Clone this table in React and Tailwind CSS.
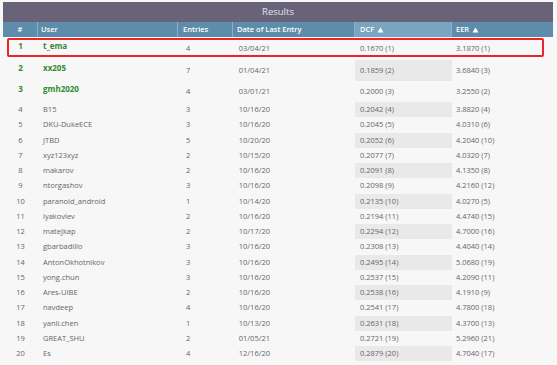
const ROWS = [
  ['1', 't_ema', '4', '03/04/21', '0.1670 (1)', '3.1870 (1)'],
  ['2', 'xx205', '7', '01/04/21', '0.1859 (2)', '3.6840 (3)'],
  ['3', 'gmh2020', '4', '03/01/21', '0.2000 (3)', '3.2550 (2)'],
  ['4', 'B15', '3', '10/16/20', '0.2042 (4)', '3.8820 (4)'],
  ['5', 'DKU-DukeECE', '3', '10/16/20', '0.2045 (5)', '4.0310 (6)'],
  ['6', 'JTBD', '5', '10/20/20', '0.2052 (6)', '4.2040 (10)'],
  ['7', 'xyz123xyz', '2', '10/15/20', '0.2077 (7)', '4.0320 (7)'],
  ['8', 'makarov', '2', '10/16/20', '0.2091 (8)', '4.1350 (8)'],
  ['9', 'ntorgashov', '3', '10/16/20', '0.2098 (9)', '4.2160 (12)'],
  ['10', 'paranoid_android', '1', '10/14/20', '0.2135 (10)', '4.0270 (5)'],
  ['11', 'iyakovlev', '2', '10/16/20', '0.2194 (11)', '4.4740 (15)'],
  ['12', 'matejkap', '2', '10/17/20', '0.2294 (12)', '4.7000 (16)'],
  ['13', 'gbarbadillo', '3', '10/16/20', '0.2308 (13)', '4.4040 (14)'],
  ['14', 'AntonOkhotnikov', '3', '10/16/20', '0.2495 (14)', '5.0680 (19)'],
  ['15', 'yong.chun', '3', '10/16/20', '0.2537 (15)', '4.2090 (11)'],
  ['16', 'Ares-UIBE', '2', '10/16/20', '0.2538 (16)', '4.1910 (9)'],
  ['17', 'navdeep', '4', '10/16/20', '0.2541 (17)', '4.7800 (18)'],
  ['18', 'yanli.chen', '1', '10/13/20', '0.2631 (18)', '4.3700 (13)'],
  ['19', 'GREAT_SHU', '2', '01/05/21', '0.2721 (19)', '5.2960 (21)'],
  ['20', 'Es', '4', '12/16/20', '0.2879 (20)', '4.7040 (17)'],
];

const COLS = 'grid grid-cols-[35px_140px_55px_122px_97px_101px]';

function Tri() {
  return (
    <svg width="7" height="6" viewBox="0 0 7 6" className="ml-[3px] inline-block">
      <path d="M3.5 0.5 L6.5 5.5 L0.5 5.5 Z" fill="#fff" />
    </svg>
  );
}

function Row({ r, i }) {
  const top = i < 3;
  const h = i === 0 ? 'h-[23px]' : top ? 'h-[21px]' : 'h-[15.25px]';
  const shade = i % 2 === 1 ? 'bg-[#e9e9e9]' : '';
  const lead = top ? 'pb-[6px] font-bold text-[8px] text-[#2f8a2f]' : '';
  return (
    <div className={`${COLS} ${h} items-stretch text-[#666]`}>
      <div className={`flex items-center justify-center ${lead}`}>{r[0]}</div>
      <div className={`flex items-center pl-[5px] ${lead}`}>{r[1]}</div>
      <div className="flex items-center pl-[8px]">{r[2]}</div>
      <div className="flex items-center justify-end pr-[85px] whitespace-nowrap">{r[3]}</div>
      <div className={`flex items-center pl-[5px] ${shade}`}>{r[4]}</div>
      <div className="flex items-center pl-[4px]">{r[5]}</div>
    </div>
  );
}

export default function App() {
  return (
    <div className="w-[557px] h-[365px] bg-[#f7f7f7] overflow-hidden pt-[2px] px-[3px] font-['Open_Sans',sans-serif] text-[7.5px] relative">
      <div className="w-[550px]">
        <div className="h-[20px] bg-[#686379] text-[#e4e2ea] text-[9.5px] flex items-center justify-center">
          Results
        </div>
        <div className={`${COLS} h-[15px] bg-[#5d8dab] text-white font-semibold`}>
          <div className="flex items-center justify-center border-r border-[#8db0c6]">#</div>
          <div className="flex items-center pl-[3px] border-r border-[#8db0c6]">User</div>
          <div className="flex items-center pl-[5px] border-r border-[#8db0c6]">Entries</div>
          <div className="flex items-center pl-[4px] border-r border-[#8db0c6]">Date of Last Entry</div>
          <div className="flex items-center pl-[5px] bg-[#79a5c0] border-r border-[#8db0c6]">DCF<Tri /></div>
          <div className="flex items-center pl-[4px]">EER<Tri /></div>
        </div>
        {ROWS.map((r, i) => (
          <Row key={r[0]} r={r} i={i} />
        ))}
      </div>
      <div className="absolute left-[7px] top-[38px] w-[537px] h-[19px] border-2 border-[#e8262a] rounded-[2px]" />
    </div>
  );
}
